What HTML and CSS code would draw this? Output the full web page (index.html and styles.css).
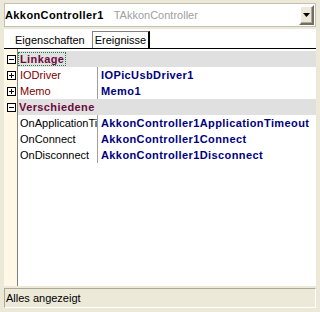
FILE: index.html
```html
<!DOCTYPE html>
<html lang="de">
<head>
  <meta charset="UTF-8">
  <title>Objektinspektor</title>
  <link rel="stylesheet" href="styles.css">
</head>
<body>
  <div class="inspector">
    <div class="combo">
      <span class="obj-name">AkkonController1</span>
      <span class="obj-type">TAkkonController</span>
      <span class="drop-btn">
        <svg width="7" height="4" viewBox="0 0 7 4"><path d="M0 0h7L3.5 4z" fill="#000"/></svg>
      </span>
    </div>

    <div class="tabs">
      <span class="tab">Eigenschaften</span>
      <span class="tab active">Ereignisse</span>
    </div>

    <div class="grid">
      <div class="row category">
        <span class="gutter">
          <svg class="box" width="9" height="9" viewBox="0 0 9 9"><rect x="0.5" y="0.5" width="8" height="8" fill="#fff" stroke="#000"/><path d="M2 4.5h5" stroke="#000"/></svg>
        </span>
        <span class="cat-name"><span class="focus">Linkage</span></span>
      </div>
      <div class="row">
        <span class="gutter">
          <svg class="box" width="9" height="9" viewBox="0 0 9 9"><rect x="0.5" y="0.5" width="8" height="8" fill="#fff" stroke="#000"/><path d="M2 4.5h5M4.5 2v5" stroke="#000"/></svg>
        </span>
        <span class="name ref">IODriver</span>
        <span class="value">IOPicUsbDriver1</span>
      </div>
      <div class="row">
        <span class="gutter">
          <svg class="box" width="9" height="9" viewBox="0 0 9 9"><rect x="0.5" y="0.5" width="8" height="8" fill="#fff" stroke="#000"/><path d="M2 4.5h5M4.5 2v5" stroke="#000"/></svg>
        </span>
        <span class="name ref">Memo</span>
        <span class="value">Memo1</span>
      </div>
      <div class="row category">
        <span class="gutter">
          <svg class="box" width="9" height="9" viewBox="0 0 9 9"><rect x="0.5" y="0.5" width="8" height="8" fill="#fff" stroke="#000"/><path d="M2 4.5h5" stroke="#000"/></svg>
        </span>
        <span class="cat-name">Verschiedene</span>
      </div>
      <div class="row">
        <span class="gutter"></span>
        <span class="name">OnApplicationTimeout</span>
        <span class="value">AkkonController1ApplicationTimeout</span>
      </div>
      <div class="row">
        <span class="gutter"></span>
        <span class="name">OnConnect</span>
        <span class="value">AkkonController1Connect</span>
      </div>
      <div class="row">
        <span class="gutter"></span>
        <span class="name">OnDisconnect</span>
        <span class="value">AkkonController1Disconnect</span>
      </div>
    </div>

    <div class="status">Alles angezeigt</div>
  </div>
</body>
</html>
```

FILE: styles.css
```css
body {
  margin: 0;
  background: #ece9d8;
  font-family: "Liberation Sans", Arial, sans-serif;
  font-size: 11px;
  color: #000;
}

.inspector {
  width: 312px;
  height: 305px;
  padding: 3px 4px 4px 4px;
  display: flex;
  flex-direction: column;
}

.combo {
  height: 20px;
  display: flex;
  align-items: center;
  background: #fff;
  border: 1px solid #c4c1b4;
  padding: 1px 1px 1px 1px;
}

.obj-name {
  font-weight: bold;
  letter-spacing: 0.4px;
  margin-left: -1px;
}

.obj-type {
  color: #a0a0a0;
  margin-left: 10px;
  flex: 1;
}

.drop-btn {
  width: 11px;
  height: 16px;
  display: flex;
  align-items: center;
  justify-content: center;
  background: #ece9d8;
  border: 2px solid;
  border-color: #fff #716f64 #716f64 #fff;
  box-shadow: inset -1px -1px 0 #aca899;
}

.tabs {
  margin-top: 2px;
  height: 19px;
  display: flex;
  align-items: flex-end;
  background: #fff;
  border-bottom: 1px solid #000;
  padding-left: 8px;
}

.tab {
  height: 16px;
  line-height: 16px;
  padding: 0 3px;
}

.tab.active {
  margin-left: 4px;
  border: 1px solid #808080;
  border-right: 2px solid #000;
  border-bottom: none;
  padding: 0 2px;
}

.grid {
  flex: 1;
  padding-top: 2px;
  background: linear-gradient(to right, #fff8e6 0 13px, #808080 13px 14px, #fff 14px);
}

.row {
  height: 16px;
  line-height: 16px;
  display: flex;
}

.gutter {
  width: 14px;
  flex: none;
  display: flex;
  align-items: center;
  padding-left: 3px;
  box-sizing: border-box;
}

.box {
  display: block;
}

.cat-name {
  flex: 1;
  background: #e0e0e0;
  color: #6b0a3c;
  font-weight: bold;
  letter-spacing: 0.4px;
  padding-left: 1px;
}

.focus {
  outline: 1px dotted #2a7a4a;
  padding: 0 1px;
}

.name {
  width: 77px;
  flex: none;
  padding-left: 2px;
  white-space: nowrap;
  overflow: hidden;
}

.name.ref {
  color: #800000;
}

.value {
  flex: 1;
  border-left: 1px solid #a0a0a0;
  padding-left: 3px;
  color: #000080;
  font-weight: bold;
  letter-spacing: 0.4px;
  white-space: nowrap;
  overflow: hidden;
}

.status {
  margin-top: 2px;
  height: 18px;
  line-height: 18px;
  padding-left: 1px;
  border: 1px solid;
  border-color: #aca899 #fff #fff #aca899;
}
```
